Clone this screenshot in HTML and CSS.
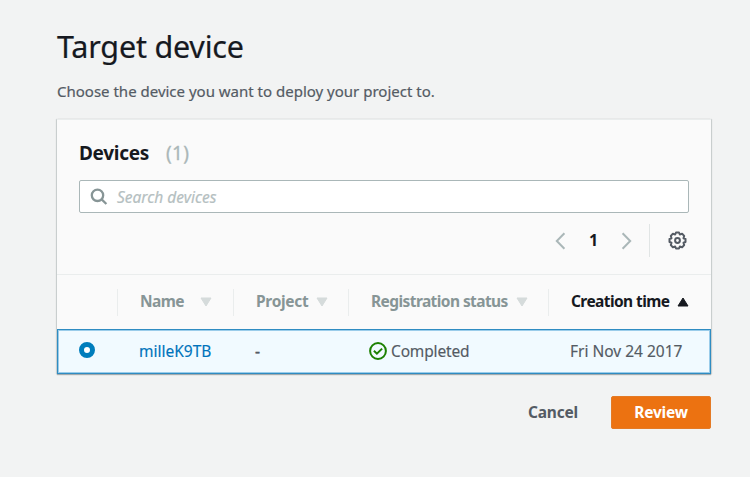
FILE: index.html
```html
<!DOCTYPE html>
<html lang="en">
<head>
<meta charset="utf-8">
<title>Target device</title>
<link rel="stylesheet" href="styles.css">
</head>
<body>
<main class="page">
  <h1 class="title"><span>Target device</span></h1>
  <p class="intro"><span>Choose the device you want to deploy your project to.</span></p>
  <section class="card">
    <header class="card-head">
      <h2 class="heading"><span class="heading-text">Devices</span><span class="count">(1)</span></h2>
      <div class="search">
        <svg class="search-icon" width="18" height="18" viewBox="0 0 18 18" fill="none" stroke="#879596" stroke-width="2.3"><circle cx="7.5" cy="7.3" r="5.7"/><path d="M11.6 11.4l4.8 4.6"/></svg>
        <span class="placeholder">Search devices</span>
      </div>
      <div class="pager">
        <svg class="chevron" width="11" height="18" viewBox="0 0 11 18"><path d="M9.4 1.3L1.8 9l7.6 7.7"/></svg>
        <span class="page-number">1</span>
        <svg class="chevron" width="11" height="18" viewBox="0 0 11 18"><path d="M1.6 1.3L9.2 9l-7.6 7.7"/></svg>
        <span class="divider"></span>
        <svg class="gear" width="20" height="20" viewBox="-9.5 -9.5 20 20" fill="none" stroke="#545b64" stroke-width="2" stroke-linejoin="round"><path d="M-1.5-8H1.5L2.3-6 4.6-6.7 6.7-4.6 6-2.3 8-1.5V1.5L6 2.3 6.7 4.6 4.6 6.7 2.3 6 1.5 8H-1.5L-2.3 6-4.6 6.7-6.7 4.6-6 2.3-8 1.5V-1.5L-6-2.3-6.7-4.6-4.6-6.7-2.3-6Z"/><circle r="2.4"/></svg>
      </div>
    </header>
    <div class="grid columns">
      <div></div>
      <div class="column"><span class="name">Name</span><svg class="sort name-sort" width="12" height="10" viewBox="0 0 12 10"><path d="M1 1H11L6 9Z"/></svg></div>
      <div class="column"><span class="project">Project</span><svg class="sort" width="12" height="10" viewBox="0 0 12 10"><path d="M1 1H11L6 9Z"/></svg></div>
      <div class="column"><span class="registration">Registration status</span><svg class="sort" width="12" height="10" viewBox="0 0 12 10"><path d="M1 1H11L6 9Z"/></svg></div>
      <div class="column sorted"><span class="creation">Creation time</span><svg class="sort" width="12" height="10" viewBox="0 0 12 10"><path d="M1 9H11L6 1Z"/></svg></div>
    </div>
    <div class="grid row">
      <div class="select"><span class="radio"></span></div>
      <div class="cell"><a class="device">milleK9TB</a></div>
      <div class="cell dash"><span>-</span></div>
      <div class="cell status"><svg width="18" height="18" viewBox="0 0 18 18" fill="none" stroke="#1d8102" stroke-width="2"><circle cx="9" cy="9" r="7.9"/><path d="M4.9 8.8l3 2.9 5.2-5.1"/></svg><span class="completed">Completed</span></div>
      <div class="cell"><span class="date">Fri Nov 24 2017</span></div>
    </div>
  </section>
  <footer class="actions">
    <span class="cancel">Cancel</span>
    <button class="review"><span>Review</span></button>
  </footer>
</main>
</body>
</html>
```
FILE: styles.css
```css
* { box-sizing: border-box; }
body {
  margin: 0;
  width: 750px;
  height: 477px;
  background: #f2f3f3;
  color: #545b64;
  font: 15.5px/20px "Noto Sans", "Open Sans", sans-serif;
  white-space: nowrap;
}
svg { display: block; flex: none; }
.page { padding: 26px 39px 0 57px; }
.title {
  margin: 0;
  height: 42px;
  color: #16191f;
  font-size: 30.5px;
  font-weight: 400;
  line-height: 40px;
  letter-spacing: -.2px;
  -webkit-text-stroke: .2px;
}
.intro { margin: 13px 0 18px; font-size: 15px; -webkit-text-stroke: .2px; }
.card {
  height: 255px;
  background: #fafafa;
  border-top: 1px solid #eaeded;
  box-shadow: 0 1px 1px rgba(0, 28, 36, .3), 1px 0 1px rgba(0, 28, 36, .12), -1px 0 1px rgba(0, 28, 36, .12);
}
.card-head { height: 155px; padding: 20px 22px 0; border-bottom: 1px solid #eaeded; }
.heading {
  display: flex;
  gap: 17px;
  margin: 0;
  height: 26px;
  color: #16191f;
  font-size: 19px;
  line-height: 26px;
  letter-spacing: -.3px;
}
.count { color: #aab7b8; font-weight: 400; letter-spacing: .3px; -webkit-text-stroke: .3px; }
.search {
  display: flex;
  align-items: center;
  height: 33px;
  margin-top: 14px;
  padding-left: 10px;
  background: #fff;
  border: 1px solid #aab7b8;
  border-radius: 2px;
}
.placeholder { margin-left: 9px; color: #b5c0c1; font-style: italic; -webkit-text-stroke: .2px; }
.pager { display: flex; align-items: center; justify-content: flex-end; height: 33px; margin-top: 11px; padding-right: 1px; }
.chevron { fill: none; stroke: #aab7b8; stroke-width: 2; }
.page-number { width: 55px; padding-bottom: 1px; color: #16191f; font-size: 16px; font-weight: 700; text-align: center; }
.divider { width: 1px; height: 33px; margin: 0 18px 0 17px; background: #e1e5e5; }
.gear { margin-top: 1px; }
.grid { display: grid; grid-template-columns: 60px 116px 115px 200px 163px; align-items: center; }
.columns { height: 54px; color: #879596; font-size: 15.5px; font-weight: 700; }
.column { display: flex; align-items: center; height: 27px; padding-left: 22px; border-left: 1px solid #eaeded; }
.column span { padding-bottom: 2px; letter-spacing: -.58px; }
.column .project { letter-spacing: -.3px; }
.sort { margin-left: 8px; fill: #d5dbdb; stroke: #d5dbdb; stroke-linejoin: round; }
.name-sort { margin-left: 16px; }
.sorted { color: #16191f; }
.sorted .sort { fill: #16191f; stroke: #16191f; }
.row {
  height: 45px;
  background: #f1faff;
  border: 1px solid #2f8cc2;
  box-shadow: inset 0 0 0 1px #9accea;
  grid-template-columns: 59px 116px 115px 200px 162px;
}
.select { padding-left: 21px; }
.radio { display: block; width: 16px; height: 16px; background: #fff; border: 5px solid #007dbc; border-radius: 50%; margin-top: -3px; }
.cell { padding: 0 0 1px 22px; }
.device { color: #0073bb; -webkit-text-stroke: .15px; }
.dash { -webkit-text-stroke: .4px; }
.status { display: flex; align-items: center; gap: 4px; padding-left: 21px; }
.completed { letter-spacing: -.15px; -webkit-text-stroke: .15px; }
.date { -webkit-text-stroke: .15px; }
.actions { display: flex; justify-content: flex-end; align-items: center; height: 33px; margin-top: 22px; }
.cancel { margin-right: 33px; padding-bottom: 1px; font-weight: 700; letter-spacing: -.2px; }
.review { width: 100px; height: 33px; padding: 0 0 1px; background: #ec7211; border: 1px solid #e47a25; border-radius: 2px; color: #fff; font: inherit; font-weight: 700; letter-spacing: -.2px; }
```
